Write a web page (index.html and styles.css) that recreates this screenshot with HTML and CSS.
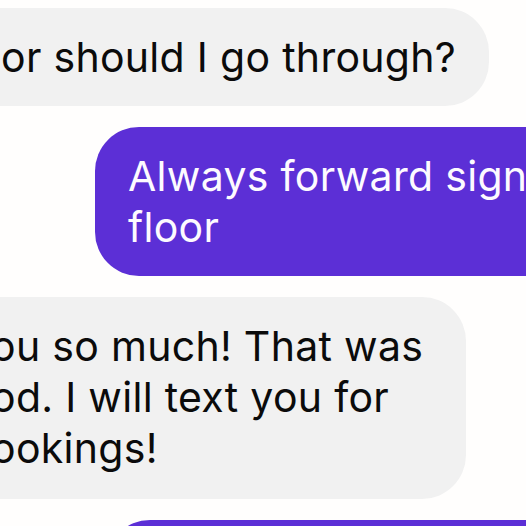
FILE: index.html
```html
<!DOCTYPE html>
<html lang="en">
<head>
    <meta charset="UTF-8">
    <meta name="viewport" content="width=device-width, initial-scale=1.0">
    <title>Messages</title>
    <link rel="stylesheet" href="styles.css">
</head>
<body>

    <div class="chat">
        <!-- Message reçu -->
        <div class="bubble received first">
            <p>or should I go through?</p>
        </div>

        <!-- Message envoyé -->
        <div class="bubble sent">
            <p>Always forward sign<br>floor</p>
        </div>

        <div class="bubble received second">
            <p>ou so much! That was<br>od. I will text you for<br>ookings!</p>
        </div>

        <div class="bubble sent next"></div>
    </div>

</body>
</html>
```

FILE: styles.css
```css
/* Style général */
html, body {
    height: 100%;
}

body {
    margin: 0;
    background-color: #fffefd;
    font-family: Inter, "Noto Sans", sans-serif;
    overflow: hidden;
}

.chat {
    display: flex;
    flex-direction: column;
    gap: 21px;
    padding-top: 8px;
}

.bubble {
    box-sizing: border-box;
    padding: 24px 33px 23px 33px;
    border-radius: 44px;
    font-size: 41px;
    line-height: 51px;
    letter-spacing: 0.3px;
    white-space: nowrap;
}

.bubble p {
    margin: 0;
}

/* Messages reçus, gris */
.received {
    align-self: flex-start;
    background-color: #f1f1f1;
    color: #0b0b0b;
    margin-left: -60px;
}

.first {
    width: 549px;
    padding-left: 61px;
}

.second {
    width: 526px;
    padding-left: 51px;
    padding-bottom: 25px;
}

/* Messages envoyés, violet */
.sent {
    align-self: flex-end;
    background-color: #5c2fd6;
    color: #fdfaff;
    margin-right: -80px;
    width: 511px;
    overflow: hidden;
}

.next {
    width: 500px;
    height: 120px;
}
```
